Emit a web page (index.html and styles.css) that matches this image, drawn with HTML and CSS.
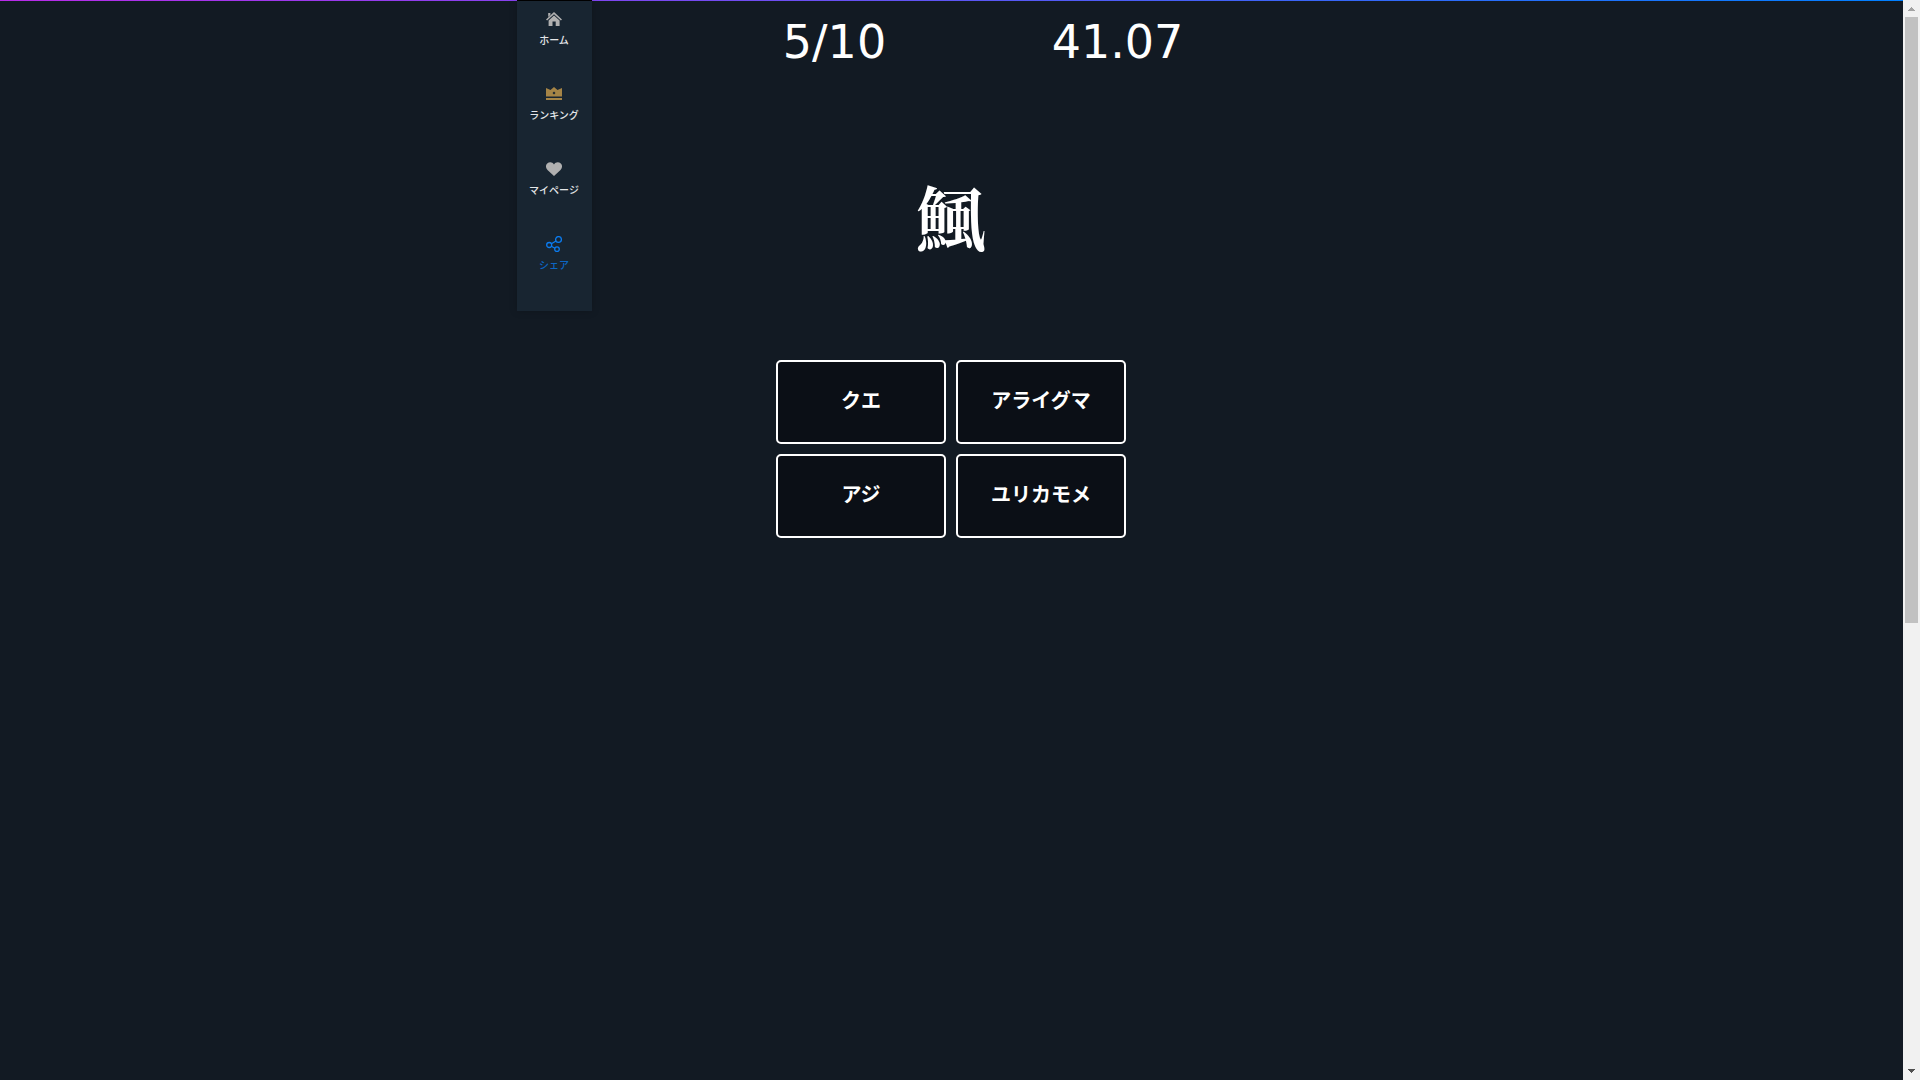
FILE: index.html
```html
<!DOCTYPE html>
<html lang="ja">
<head>
<meta charset="utf-8">
<title>漢字クイズ</title>
<link rel="stylesheet" href="styles.css">
</head>
<body>
<div class="page">
  <nav class="menu">
    <a class="menu-item" href="#home">
      <svg class="icon" viewBox="0 0 16 16" aria-hidden="true"><path d="M8 1 16 8.400 14.900 9.600 8 3.200 1.100 9.600 0 8.400z"/><path d="M2.200 2h2.200v2L2.200 6zM8 4.500 13.600 9.600V15H9.700V10.500H6.500V15H2.600V9.600z"/></svg>
      <span>ホーム</span>
    </a>
    <a class="menu-item menu-item-ranking" href="#ranking">
      <svg class="icon" viewBox="0 0 16 16" aria-hidden="true"><path fill-rule="evenodd" d="M0 2 4.500 4 8 1l3.500 3L16 2V10.500H0zM8 5.500 6.500 7 8 8.500 9.500 7z"/><path d="M0 12h16v2H0z"/></svg>
      <span>ランキング</span>
    </a>
    <a class="menu-item" href="#mypage">
      <svg class="icon" viewBox="0 0 16 16" aria-hidden="true"><path d="M8 15 1.500 9C-.5 7-.5 4 1.200 2.500 3.200.8 6.500.9 8 3.500 9.500.9 12.800.8 14.800 2.500 16.500 4 16.500 7 14.500 9z"/></svg>
      <span>マイページ</span>
    </a>
    <a class="menu-item menu-item-share" href="#share">
      <svg class="icon icon-line" viewBox="0 0 16 16" aria-hidden="true"><circle cx="3.200" cy="9" r="2.500"/><circle cx="12.500" cy="3.500" r="2.900"/><circle cx="11" cy="13.200" r="2.300"/><path d="M5.400 7.800 10 5M5.300 10.200 9 12.200"/></svg>
      <span>シェア</span>
    </a>
  </nav>
  <main class="quiz">
    <div class="status">
      <span>5/10</span>
      <span>41.07</span>
    </div>
    <h1 class="question">鯴</h1>
    <div class="answers">
      <button class="answer" type="button">クエ</button>
      <button class="answer" type="button">アライグマ</button>
      <button class="answer" type="button">アジ</button>
      <button class="answer" type="button">ユリカモメ</button>
    </div>
  </main>
</div>
<div class="scrollbar" aria-hidden="true">
  <svg class="arrow arrow-up" viewBox="0 0 17 17"><path d="M8 7h1v1h1v1h1v1h1v1H5v-1h1V9h1V8h1z"/></svg>
  <div class="track"><div class="thumb"></div></div>
  <svg class="arrow arrow-down" viewBox="0 0 17 17"><path d="M5 6h7v1h-1v1h-1v1H9v1H8V9H7V8H6V7H5z"/></svg>
</div>
</body>
</html>
```
FILE: styles.css
```css
* {
  box-sizing: border-box;
}

body {
  display: flex;
  min-height: 100vh;
  margin: 0;
  background: #121a23;
  color: #fff;
  font-family: "Noto Sans CJK JP", sans-serif;
}

.page {
  position: relative;
  flex: 1;
  border-top: 1px solid;
  border-image: linear-gradient(to right, #b92be8, #0080ff) 1;
}

.menu {
  position: absolute;
  top: -1px;
  left: calc(50% - 435px);
  width: 75px;
  padding-bottom: 10px;
  border-top: 1px solid #000;
  background: #182531;
  box-shadow: 0 0 8px rgba(0, 0, 0, 0.2);
}

.menu-item {
  display: flex;
  flex-direction: column;
  align-items: center;
  gap: 4px;
  height: 75px;
  padding-top: 10px;
  color: #e4e6e8;
  font-size: 10px;
  font-weight: 500;
  line-height: 18px;
  text-decoration: none;
}

.icon {
  width: 16px;
  height: 16px;
  fill: #b0b0b0;
}

.menu-item-ranking .icon {
  fill: #a58446;
}

.menu-item-share {
  color: #0c66c4;
}

.icon-line {
  fill: none;
  stroke: #0b7cf0;
  stroke-width: 1.3;
}

.quiz {
  display: flex;
  flex-direction: column;
  align-items: center;
  padding-right: 1px;
}

.status {
  display: grid;
  grid-template-columns: 283px 283px;
  padding-left: 50px;
  padding-top: 9px;
  font-family: "DejaVu Sans", sans-serif;
  font-size: 46px;
  line-height: 64px;
  text-align: center;
}

.question {
  margin: 94px 0 97px;
  font-family: "Noto Serif CJK JP", "Noto Sans CJK JP", serif;
  font-size: 70px;
  font-weight: 700;
  line-height: 95px;
}

.answers {
  display: grid;
  grid-template-columns: 170px 170px;
  gap: 10px;
}

.answer {
  height: 84px;
  padding: 0 0 6px;
  border: 2px solid #fff;
  border-radius: 5px;
  background: #0b0f16;
  color: #fff;
  font-family: inherit;
  font-size: 20px;
  font-weight: 700;
}

.scrollbar {
  display: flex;
  flex-direction: column;
  width: 17px;
  background: #f1f1f1;
}

.arrow {
  width: 17px;
  height: 17px;
}

.arrow-up {
  fill: #a3a3a3;
}

.arrow-down {
  fill: #505050;
}

.track {
  flex: 1;
  padding: 0 2px;
}

.thumb {
  height: 58vh;
  max-height: 606px;
  background: #c1c1c1;
}
```
